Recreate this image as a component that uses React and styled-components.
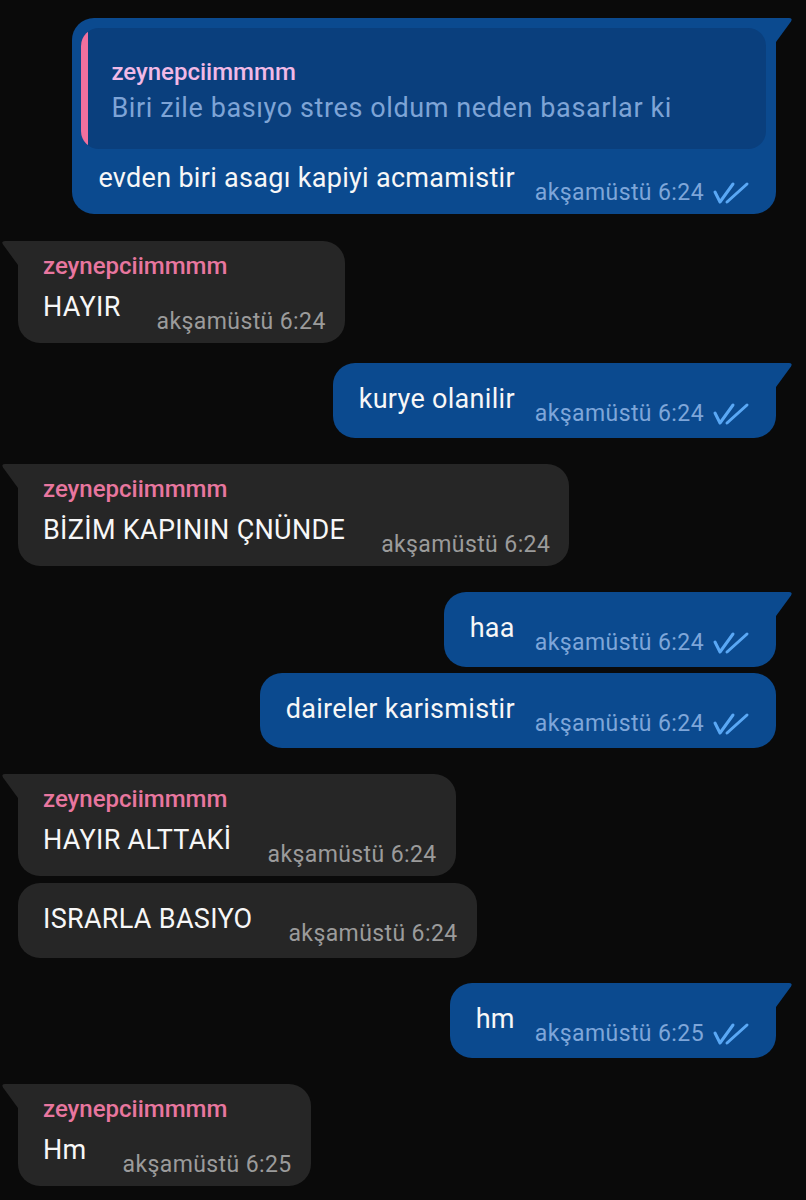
import React from 'react';
import styled, { createGlobalStyle } from 'styled-components';

const GlobalStyle = createGlobalStyle`
    html, body {
        margin: 0;
        padding: 0;
        background: #0a0a0a;
    }
    body {
        font-family: Roboto, "Noto Sans", sans-serif;
    }
`

const Page = styled.div`
    width: 806px;
    min-height: 1200px;
    box-sizing: border-box;
    padding: 18px 30px 20px 18px;
    display: flex;
    flex-direction: column;
`
const Bubble = styled.div`
    position: relative;
    align-self: ${p => (p.$out ? 'flex-end' : 'flex-start')};
    margin-top: ${p => p.$gap}px;
    background: ${p => (p.$out ? '#0b4a8f' : '#262626')};
    border-radius: 22px;
    border-top-right-radius: ${p => (p.$out && p.$tail ? 0 : 22)}px;
    border-top-left-radius: ${p => (!p.$out && p.$tail ? 0 : 22)}px;
    padding: ${p => p.$pt}px ${p => (p.$out ? 24 : 19)}px ${p => p.$pb}px ${p => (p.$out ? 26 : 25)}px;
`
const Tail = styled.svg`
    position: absolute;
    top: 0;
    ${p => (p.$out ? 'right: -17px;' : 'left: -17px;')}
    width: 18px;
    height: 24px;
`
const Reply = styled.div`
    margin: 0 -14px 12px -17px;
    background: #0a3f7d;
    border-radius: 18px;
    overflow: hidden;
    display: flex;
`
const ReplyBar = styled.div`
    width: 7px;
    background: #f0709e;
`
const ReplyBody = styled.div`
    padding: 30px 20px 25px 23px;
`
const ReplyName = styled.div`
    font-size: 24px;
    line-height: 28px;
    font-weight: 500;
    color: #f1b9e6;
`
const ReplyText = styled.div`
    margin-top: 6px;
    font-size: 27px;
    line-height: 32px;
    letter-spacing: 0.6px;
    color: #7ea4d6;
`
const Name = styled.div`
    font-size: 24px;
    line-height: 28px;
    font-weight: 500;
    color: #e8769f;
    margin-bottom: 10px;
`
const Row = styled.div`
    display: flex;
    align-items: flex-start;
`
const Text = styled.div`
    font-size: 27px;
    line-height: 34px;
    letter-spacing: 0.3px;
    color: #f7f7f7;
    white-space: nowrap;
`
const Meta = styled.div`
    display: flex;
    align-items: center;
    margin-top: 19px;
    margin-left: ${p => (p.$out ? 20 : 36)}px;
    font-size: 23px;
    line-height: 26px;
    letter-spacing: 0.4px;
    color: ${p => (p.$out ? '#7ea6d9' : '#9b9b9b')};
    white-space: nowrap;
`
const Checks = styled.svg`
    width: 40px;
    height: 24px;
    margin-left: 8px;
`

const DoubleCheck = () => (
    <Checks viewBox="0 0 40 24" fill="none" stroke="#5aa8f5" strokeWidth="3" strokeLinecap="round" strokeLinejoin="round">
        <path d="M3 11 L8 21 L21 3" />
        <path d="M15 21 L35 3" />
    </Checks>
)

const messages = [
    { out: true, tail: true, gap: 0, reply: { name: 'zeynepciimmmm', text: 'Biri zile basıyo stres oldum neden basarlar ki' }, text: 'evden biri asagı kapiyi acmamistir', time: 'akşamüstü 6:24' },
    { out: false, tail: true, gap: 27, name: 'zeynepciimmmm', text: 'HAYIR', time: 'akşamüstü 6:24' },
    { out: true, tail: true, gap: 20, text: 'kurye olanilir', time: 'akşamüstü 6:24' },
    { out: false, tail: true, gap: 26, name: 'zeynepciimmmm', text: 'BİZİM KAPININ ÇNÜNDE', time: 'akşamüstü 6:24' },
    { out: true, tail: true, gap: 26, text: 'haa', time: 'akşamüstü 6:24' },
    { out: true, gap: 6, text: 'daireler karismistir', time: 'akşamüstü 6:24' },
    { out: false, tail: true, gap: 26, name: 'zeynepciimmmm', text: 'HAYIR ALTTAKİ', time: 'akşamüstü 6:24' },
    { out: false, gap: 7, text: 'ISRARLA BASIYO', time: 'akşamüstü 6:24' },
    { out: true, tail: true, gap: 25, text: 'hm', time: 'akşamüstü 6:25' },
    { out: false, tail: true, gap: 26, name: 'zeynepciimmmm', text: 'Hm', time: 'akşamüstü 6:25' },
]

const Message = ({ m }) => {
    const pt = m.reply ? 10 : m.name ? 11 : 19
    const pb = m.reply ? 8 : m.name ? 8 : 11
    const fill = m.out ? '#0b4a8f' : '#262626'
    return (
        <Bubble $out={m.out} $tail={m.tail} $gap={m.gap} $pt={pt} $pb={pb}>
            {m.tail && (
                <Tail $out={m.out} viewBox="0 0 18 24">
                    {m.out
                        ? <path d="M0 0 H14 Q18 0 16 3.5 L1 24 H0 Z" fill={fill} />
                        : <path d="M18 0 H4 Q0 0 2 3.5 L17 24 H18 Z" fill={fill} />}
                </Tail>
            )}
            {m.reply && (
                <Reply>
                    <ReplyBar />
                    <ReplyBody>
                        <ReplyName>{m.reply.name}</ReplyName>
                        <ReplyText>{m.reply.text}</ReplyText>
                    </ReplyBody>
                </Reply>
            )}
            {m.name && <Name>{m.name}</Name>}
            <Row>
                <Text>{m.text}</Text>
                <Meta $out={m.out}>
                    {m.time}
                    {m.out && <DoubleCheck />}
                </Meta>
            </Row>
        </Bubble>
    )
}

const App = () => (
    <Page>
        <GlobalStyle />
        {messages.map((m, i) => (
            <Message key={i} m={m} />
        ))}
    </Page>
)

export default App;
